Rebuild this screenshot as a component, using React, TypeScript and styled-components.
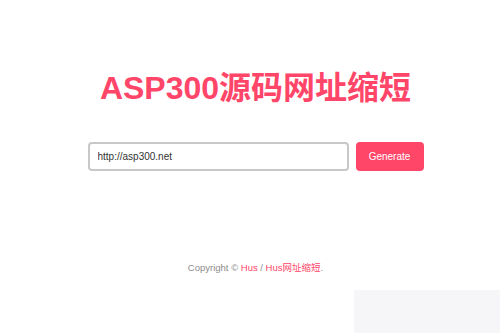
import React from "react";
import styled, { createGlobalStyle } from "styled-components";

const GlobalStyle = createGlobalStyle`
  html, body {
    margin: 0;
    padding: 0;
    background: #ffffff;
    font-family: "Liberation Sans", Arial, "Noto Sans CJK SC", sans-serif;
  }
`;

const Page = styled.div`
  display: flex;
  flex-direction: column;
  align-items: center;
  width: 500px;
  height: 333px;
  padding-left: 11px;
  box-sizing: border-box;
  overflow: hidden;
`;

const Title = styled.h1`
  margin: 70px 0 0 0;
  font-size: 32px;
  line-height: 37px;
  font-weight: 700;
  color: #ff4669;
  font-family: "Liberation Sans", Arial, "Noto Sans CJK SC", sans-serif;
`;

const Form = styled.form`
  display: flex;
  gap: 7px;
  margin-top: 35px;
`;

const UrlInput = styled.input`
  width: 261px;
  height: 29px;
  box-sizing: border-box;
  border: 2px solid #c8c8ca;
  border-radius: 4px;
  padding: 0 8px;
  font-size: 10px;
  color: #333;
  font-family: "Liberation Sans", Arial, sans-serif;
  outline: none;
`;

const Button = styled.button`
  width: 68px;
  height: 29px;
  border: none;
  border-radius: 4px;
  background: #ff4669;
  color: #ffffff;
  font-size: 10px;
  font-family: "Liberation Sans", Arial, sans-serif;
  cursor: pointer;
`;

const Footer = styled.p`
  margin: 89px 0 0 0;
  font-size: 9.5px;
  color: #8d8d8d;
`;

const Link = styled.a`
  color: #ff4669;
  text-decoration: none;
`;

const Corner = styled.div`
  position: fixed;
  right: 0;
  bottom: 0;
  width: 146px;
  height: 43px;
  background: #f6f6f8;
`;

const App: React.FC = () => {
  return (
    <>
      <GlobalStyle />
      <Page>
        <Title>ASP300源码网址缩短</Title>
        <Form onSubmit={(e) => e.preventDefault()}>
          <UrlInput defaultValue="http://asp300.net" />
          <Button type="submit">Generate</Button>
        </Form>
        <Footer>
          Copyright © <Link href="#">Hus</Link> / <Link href="#">Hus网址缩短</Link>.
        </Footer>
      </Page>
      <Corner />
    </>
  );
};

export default App;
